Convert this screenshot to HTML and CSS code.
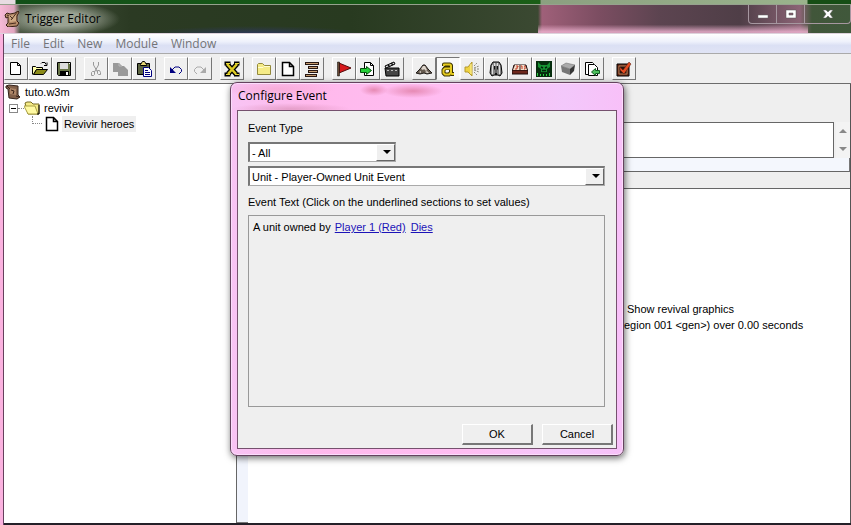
FILE: index.html
```html
<!DOCTYPE html>
<html lang="en">
<head>
<meta charset="utf-8">
<title>Trigger Editor</title>
<link rel="stylesheet" href="styles.css">
</head>
<body>
<div class="desktop"></div>
<main class="window">
  <header class="titlebar">
    <svg class="icon app-icon" viewBox="0 0 16 16"><path d="M1 4l2-2 3 1 5-1 3-2 1 1-2 4v5l2 2-2 3-9 1-2-2 2-2V6L2 7z" fill="#b58a68" stroke="#382015"/><path d="M5 5l7-1v6l-6 1z" fill="#d0aa85"/><path d="M14 0L7 9M5 13l7-1M3 4l2 1M6 5l3 3" stroke="#4b2d20" fill="none"/></svg>
    <h1 class="title">Trigger Editor</h1>
    <div class="caption-buttons">
      <button class="caption-button" aria-label="Minimize"><svg viewBox="0 0 16 12"><path d="M3 7h10v3H3z" fill="#fff" stroke="#666" stroke-width=".5"/></svg></button>
      <button class="caption-button" aria-label="Maximize"><svg viewBox="0 0 16 12"><path d="M3 2h10v8H3zM6 5h4v2H6z" fill="#fff" fill-rule="evenodd" stroke="#555" stroke-width=".5"/></svg></button>
      <button class="caption-button close" aria-label="Close"><svg viewBox="0 0 16 12"><path d="M3 2h3l2 2 2-2h3L10 6l3 4h-3L8 8l-2 2H3l3-4z" fill="#fff" stroke="#555" stroke-width=".5"/></svg></button>
    </div>
  </header>
  <div class="client">
    <nav class="menubar">
      <a href="#">File</a><a href="#">Edit</a><a href="#">New</a><a href="#">Module</a><a href="#">Window</a>
    </nav>
    <div class="toolbar">
      <div class="group">
        <button class="tool" aria-label="New"><svg class="icon" viewBox="0 0 16 16"><path d="M2.500 1.500h7l3 3v9h-10zM9.500 1.500v3h3" fill="#fff" stroke="#000"/></svg></button>
        <button class="tool" aria-label="Open"><svg class="icon" viewBox="0 0 16 16"><path d="M.5 13.500v-8h3l1 1h6v2h-6l-3 5" fill="#ffffa8" stroke="#000"/><path d="M1.500 13.500l3-5h11l-4 5z" fill="#8a8a18" stroke="#000"/><path d="M9 2.500l1-1h3l1 2M12 4.500h3v-3" fill="none" stroke="#000"/></svg></button>
        <button class="tool" aria-label="Save"><svg class="icon" viewBox="0 0 16 16"><path d="M1.500 1.500h13v13h-12l-1-1z" fill="#687548" stroke="#000"/><path d="M4 2h8v6H4z" fill="#ddd"/><path d="M4 10h9v4H4z" fill="#000"/><path d="M10 11h2v3h-2zM13 2h1v1h-1z" fill="#fff"/></svg></button>
      </div>
      <div class="group">
        <button class="tool" aria-label="Cut"><svg class="icon" viewBox="0 0 16 16"><path d="M5.500 1v3l4 7M10.500 1v3l-4 7" fill="none" stroke="#999"/><path d="M4.500 10.500h2v3l-1 1h-2v-3zM9.500 9.500h2l1 2v2h-2l-1-1z" fill="none" stroke="#999"/></svg></button>
        <button class="tool" aria-label="Copy"><svg class="icon" viewBox="0 0 16 16"><path d="M1 2h6l3 3v6H1z" fill="#999"/><path d="M6 5h6l4 4v6H6z" fill="#999"/><path d="M7 2v3h3" fill="none" stroke="#bbb"/></svg></button>
        <button class="tool" aria-label="Paste"><svg class="icon" viewBox="0 0 16 16"><path d="M1.500 2.500h12v11h-12z" fill="#5d6542" stroke="#000"/><path d="M4.500 3.500l2-3h2l2 3v1h-6z" fill="#e8d875" stroke="#000"/><path d="M7.500 6.500h5l3 3v6h-8z" fill="#fff" stroke="#000080"/><path d="M9 9.500h3M9 11.500h5M9 13.500h5" stroke="#000080"/></svg></button>
      </div>
      <div class="group">
        <button class="tool" aria-label="Undo"><svg class="icon" viewBox="0 0 16 16"><path d="M4 9l3-3h4l2.500 2.500v2L11 13" fill="none" stroke="#000080"/><path d="M2 6v6h6z" fill="#000080"/></svg></button>
        <button class="tool" aria-label="Redo"><svg class="icon" viewBox="0 0 16 16"><path d="M14 6v6H8z" fill="#aaa"/><path d="M12 9L9 6H5L2.500 8.500v2L5 13" fill="none" stroke="#aaa"/></svg></button>
      </div>
      <div class="group">
        <button class="tool" aria-label="Variables"><svg class="icon" viewBox="0 0 16 16"><path d="M3 3l9 10M13 3L4 13" stroke="#000" stroke-width="5"/><path d="M.5.500h6v4h-6zM10 .5h5.500v4H10zM.5 11.500h6v4h-6zM10 11.500h5.500v4H10z" fill="#000"/><path d="M3 3l9 10M13 3L4 13" stroke="#dccb24" stroke-width="2.500"/><path d="M2 2.500h4M11 2.500h4M2 13.500h4M11 13.500h4" stroke="#e8d83a" stroke-width="1"/></svg></button>
      </div>
      <div class="group">
        <button class="tool" aria-label="New Category"><svg class="icon" viewBox="0 0 16 16"><path d="M1.500 13.500v-10l1-1h4l2 2h6v9z" fill="#f5eb87" stroke="#93893c"/><path d="M2 6.500h5l1-1h6" stroke="#fffcd0" fill="none"/></svg></button>
        <button class="tool" aria-label="New Trigger"><svg class="icon" viewBox="0 0 16 16"><path d="M2.500 1.500h7l4 4v9h-11zM9.500 1.500v4h4" fill="#fff" stroke="#000" stroke-width="1.500"/></svg></button>
        <button class="tool" aria-label="New Comment"><svg class="icon" viewBox="0 0 16 16"><path d="M1 1h14v3H1zM4 5h10v3H4zM4 9h10v3H4zM1 13h12v3H1z" fill="#281713"/><path d="M2 2.500h12M5 6.500h8M5 10.500h8M2 14.500h10" stroke="#c79d70"/></svg></button>
      </div>
      <div class="group">
        <button class="tool" aria-label="New Event"><svg class="icon" viewBox="0 0 16 16"><path d="M3 2l12 5L3 12z" fill="#d6181b" stroke="#520b0b"/><path d="M1.500 1h2v14h-2z" fill="#684a35" stroke="#000" stroke-width=".5"/></svg></button>
        <button class="tool" aria-label="New Condition"><svg class="icon" viewBox="0 0 16 16"><path d="M4.500 1.500h6l3 3v10h-9zM10.500 1.500v3h3" fill="#fff" stroke="#000"/><path d="M.5 7.500h6v-2l5 4-5 4v-2h-6z" fill="#25cf38" stroke="#064e0d"/></svg></button>
        <button class="tool" aria-label="New Action"><svg class="icon" viewBox="0 0 16 16"><path d="M1 7h14v8H2z" fill="#444" stroke="#000"/><path d="M1 5l9-4 1 2-9 4z" fill="#ddd" stroke="#000"/><path d="M4 4l2 2M7 2l2 2" stroke="#111" stroke-width="1.500"/><path d="M3 9.500h2m2 0h2m2 0h2" stroke="#bbb"/></svg></button>
      </div>
      <div class="group">
        <button class="tool" aria-label="Terrain Editor"><svg class="icon" viewBox="0 0 16 16"><path d="M0 12l4-4 3-4h2l3 4 4 4-5 1-3-1-4 1z" fill="#665b50" stroke="#211d19"/><path d="M7 5l-2 3 2 1 1-1 2 2 1-1-2-4zM3 11l2-1v2M9 11l2 1h2l-2-2z" fill="#ddd5cc"/></svg></button>
        <button class="tool pressed" aria-label="Trigger Editor"><svg class="icon" viewBox="0 0 16 16"><g fill="none" stroke-linejoin="round"><path d="M4 5V3.500h6l1 1V12l1 1h2M11 7H5L3.500 9v3L5 13.500h4l2-2" stroke="#3c3400" stroke-width="4"/><path d="M4 5V3.500h6l1 1V12l1 1h2M11 7.500H5L3.500 9v3L5 13.500h4l2-2" stroke="#e4ca20" stroke-width="2"/></g></svg></button>
        <button class="tool" aria-label="Sound Editor"><svg class="icon" viewBox="0 0 16 16"><path d="M1 6h3l4-5v14l-4-4H1z" fill="#efd341" stroke="#b3982c"/><path d="M7 3v10" stroke="#fff4a0"/><path d="M10 5l3-3M10 7l5-2M10 8h6M10 9l5 2M10 11l3 3" stroke="#88877a" stroke-dasharray="2 1"/></svg></button>
        <button class="tool" aria-label="Object Editor"><svg class="icon" viewBox="0 0 16 16"><path d="M5 1h6l2 3 1 8-2 3-2-1H6l-2 1-2-3 1-8z" fill="#888" stroke="#000"/><path d="M4.500 4v9M6.500 2v3M9.500 2v3M11.500 4v9" stroke="#ddd"/><path d="M6 5h4v3l-1 1v5H7V9L6 8z" fill="#111"/><path d="M8 3v9" stroke="#bbb"/></svg></button>
        <button class="tool" aria-label="Campaign Editor"><svg class="icon" viewBox="0 0 16 16"><path d="M2 4h12l2 7v2H0v-2z" fill="#6d271c" stroke="#1e0d0b"/><path d="M3 4h10l2 5H1z" fill="#f0dfcc"/><path d="M4 5h2v1H5v2H3M9 5h1v3M12 5h1v3h-1" fill="none" stroke="#c63d27"/><path d="M8 4v5M1 9.500h14" stroke="#3a1510"/></svg></button>
        <button class="tool" aria-label="AI Editor"><svg class="icon" viewBox="0 0 16 16"><path d="M0 0h16v16H0z" fill="#052d0d"/><path d="M2 1l3 3h6l3-3v5l-3 2v3H5V8L2 6z" fill="#169332"/><path d="M5 6l2 1M11 6L9 7M6 9.500h4" stroke="#00200a" stroke-width="1.500"/><path d="M1.500 12v3m3-2v2m3-2v2m3-2v2m3-3v3" stroke="#2ccb45"/></svg></button>
        <button class="tool" aria-label="Object Manager"><svg class="icon" viewBox="0 0 16 16"><path d="M1 5l5-3 9 2-5 4z" fill="#aaa" stroke="#666" stroke-width=".5"/><path d="M1 5l9 3v6L2 11z" fill="#777"/><path d="M10 8l5-4-1 6-4 4z" fill="#353535"/></svg></button>
        <button class="tool" aria-label="Import Manager"><svg class="icon" viewBox="0 0 16 16"><path d="M1.500 1.500h7l1 1v11h-8z" fill="#fff" stroke="#000"/><path d="M4.500 3.500h6l3 3v8h-9z" fill="#fff" stroke="#000"/><path d="M15.500 9.500h-4v-2l-4 3.500 4 3.500v-2h4z" fill="#4bc05c" stroke="#125e22"/></svg></button>
      </div>
      <div class="group">
        <button class="tool" aria-label="Test Map"><svg class="icon" viewBox="0 0 16 16"><path d="M1 3h12v12H1z" fill="#6b2b17" stroke="#000"/><path d="M3 5h8v8H3z" fill="#2b120b" stroke="#b47f59"/><path d="M4 6l3 3 6-8 2 2-7 10-4-4z" fill="#e44b20" stroke="#4b1208" stroke-width=".5"/></svg></button>
      </div>
    </div>
    <div class="workspace">
      <aside class="tree">
        <div class="tree-row"><svg class="icon" viewBox="0 0 16 16"><path d="M1 2l3-1 9 1v9l2 2-3 2-8-1-1-9-2-1z" fill="#82604a" stroke="#35231b"/><path d="M5 4l6 1v6l-6-1z" fill="#ad8567"/><path d="M6 6l3 1-1 3M2 2l3 3M11 12l3 1" stroke="#382219" fill="none"/></svg><span>tuto.w3m</span></div>
        <div class="tree-row branch"><button class="expander" aria-label="Collapse"></button><span class="dots"></span><svg class="icon" viewBox="0 0 16 16"><path d="M1 3l2-1h4l2 2h6v10H4z" fill="#f5eb87" stroke="#776b22"/><path d="M0 6h11l3 8H4z" fill="#fffaa3" stroke="#aaa043"/><path d="M15 5v9h-2" fill="none" stroke="#000"/></svg><span>revivir</span></div>
        <div class="tree-row leaf"><span class="elbow"></span><svg class="icon" viewBox="0 0 16 16"><path d="M2.500 1.500h7l4 4v9h-11zM9.500 1.500v4h4" fill="#fff" stroke="#000" stroke-width="1.500"/></svg><span class="selected">Revivir heroes</span></div>
      </aside>
      <div class="splitter"></div>
      <section class="details">
        <div class="comment"><textarea aria-label="Trigger Comment"></textarea><div class="scroller"><i class="up"></i><i class="down"></i></div></div>
        <div class="strip"></div>
        <div class="functions"><p class="first">Show revival graphics</p><p>egion 001 &lt;gen&gt;) over 0.00 seconds</p></div>
      </section>
    </div>
  </div>
</main>
<div class="overlay">
  <form class="dialog" role="dialog" aria-labelledby="dialog-title">
    <h2 class="title dialog-title" id="dialog-title">Configure Event</h2>
    <div class="dialog-body">
      <label for="category">Event Type</label>
      <div class="combo narrow"><select id="category"><option>- All</option></select></div>
      <div class="combo"><select aria-label="Event"><option>Unit - Player-Owned Unit Event</option></select></div>
      <p class="caption">Event Text (Click on the underlined sections to set values)</p>
      <div class="event-text">A unit owned by <a href="#">Player 1 (Red)</a> <a href="#">Dies</a></div>
      <div class="actions"><button type="button">OK</button><button type="button">Cancel</button></div>
    </div>
  </form>
</div>
</body>
</html>
```
FILE: styles.css
```css
* { box-sizing: border-box; }

body {
  margin: 0;
  height: 100vh;
  display: flex;
  flex-direction: column;
  position: relative;
  overflow: hidden;
  background: #242028;
  color: #000;
  font: 11px/16px "Liberation Sans", Arial, sans-serif;
}

h1, h2, p { margin: 0; }
button, select, textarea { font: inherit; color: inherit; border-radius: 0; margin: 0; }

.desktop {
  height: 4px;
  background: linear-gradient(90deg, #e8dce2 15px, #125018 16px, #1b5e17 540px, #8ba080 541px, #9ab38c 807px, #164e15 808px);
}

.icon { width: 16px; height: 16px; flex: none; display: block; }

.window {
  flex: 1;
  display: flex;
  flex-direction: column;
  border-top: 1px solid #96a28e;
  padding: 0 0 2px 4px;
  background: linear-gradient(90deg, #fbb2df 3px, #66405e 3px, #66405e 4px, transparent 4px);
}

.titlebar {
  height: 29px;
  display: flex;
  align-items: center;
  gap: 5px;
  margin-left: -4px;
  padding-left: 4px;
  border-bottom: 1px solid #ddd2dc;
  background:
    radial-gradient(ellipse 60px 17px at 60px 14px, #b1b8aacc 40%, transparent),
    radial-gradient(ellipse 110px 8px at 255px 29px, #303878aa, transparent),
    linear-gradient(transparent 70%, #f0b4d2cc 95%) 538px 0 / 270px 100% no-repeat,
    linear-gradient(90deg, #f7bad7 0, #e1a5bf 14px, #4b5743 20px, #2b3a23 130px, #283a20 350px, #3b4932 538px, #9f6079 542px, #7b4d61 600px, #5c4450 660px, #4f3e47 740px, #8b6375 800px, #41563a 812px, #40583b);
}

.title {
  font: 12px/16px "Open Sans", "Noto Sans", sans-serif;
}

.caption-buttons {
  align-self: flex-start;
  display: flex;
  margin-left: auto;
  border: 1px solid #a697a0;
  border-top: 0;
  border-radius: 0 0 4px 4px;
}
.caption-button {
  width: 28px;
  height: 18px;
  padding: 0;
  display: grid;
  place-items: center;
  border: 0;
  border-right: 1px solid #a697a0;
  background: transparent;
}
.caption-button svg { width: 16px; height: 12px; }
.caption-button.close { width: 45px; border-right: 0; }

.client { flex: 1; display: flex; flex-direction: column; }

.menubar {
  height: 19px;
  display: flex;
  align-items: center;
  gap: 13px;
  padding-left: 7px;
  background: linear-gradient(#fff, #eef1fb 40%, #dbe0f4 60%, #e0e4f5);
}
.menubar a { color: #737477; text-decoration: none; font: 12px/16px "Open Sans", "Noto Sans", sans-serif; }

.toolbar {
  height: 31px;
  display: flex;
  align-items: center;
  gap: 8px;
  border-top: 1px solid #aaa;
  border-bottom: 1px solid #6c6c6c;
  background: #efefef;
}
.group { display: flex; }
.tool {
  width: 24px;
  height: 23px;
  padding: 0;
  display: grid;
  place-items: center;
  background: #efefef;
  border: 1px solid #fff;
  border-right-color: #777;
  border-bottom-color: #777;
}
.tool.pressed { background: #f8f8f8; border-color: #777 #fff #fff #777; }

.workspace { flex: 1; display: flex; background: #fff; }

.tree { flex: 0 0 233px; border-right: 1px solid #666; }
.tree-row { height: 16px; display: flex; align-items: center; gap: 4px; padding-left: 1px; }
.tree-row.branch { padding-left: 5px; }
.tree-row.leaf { padding-left: 28px; gap: 2px; }
.expander {
  width: 9px;
  height: 9px;
  padding: 0;
  border: 1px solid #888;
  background: linear-gradient(#000, #000) center / 5px 1px no-repeat #fff;
}
.dots { width: 6px; margin: 0 -4px; border-top: 1px dotted #888; }
.elbow { width: 10px; height: 8px; align-self: flex-start; border: dotted #888; border-width: 0 0 1px 1px; }
.selected { padding: 0 2px; background: #efefef; }

.splitter { width: 11px; background: #f1f4fc; border-bottom: 1px solid #777; }

.details { flex: 1; display: flex; flex-direction: column; background: #efefef; border-right: 1px solid #555; }
.comment { display: flex; gap: 2px; margin-top: 38px; height: 36px; }
.comment textarea { flex: 1; border: 1px solid #666; background: #fff; resize: none; }
.scroller { width: 14px; display: flex; flex-direction: column; justify-content: space-between; align-items: center; padding: 7px 0; background: #f3f3f3; }
.scroller i { border: 4px solid transparent; }
.scroller .up { border-top-width: 0; border-bottom-color: #888; }
.scroller .down { border-bottom-width: 0; border-top-color: #888; }
.strip { height: 14px; background: #f4f7fd; border-bottom: 1px solid #666; border-right: 1px solid #777; }
.functions { flex: 1; margin-top: 16px; padding: 112px 0 0 376px; background: #fff; border-top: 1px solid #666; }
.functions .first { padding-left: 3px; }

.overlay {
  position: absolute;
  inset: 82px 0 auto;
  display: flex;
  justify-content: center;
  padding-left: 3px;
}
.dialog {
  width: 394px;
  padding: 6px;
  border: 1px solid #65425f;
  border-radius: 7px;
  background:
    radial-gradient(ellipse 14px 6px at 143px 7px, #e68ab4, transparent),
    radial-gradient(ellipse 30px 7px at 182px 8px, #e68ab4, transparent),
    radial-gradient(ellipse 60px 8px at 45px 6px, #f5a3cdaa, transparent),
    radial-gradient(ellipse 60px 6px at 60px 26px, #d990b6aa, transparent),
    linear-gradient(90deg, #f8c4f4, #ffb9ec 20%, #ffbdf2 60%, #f3c8fb 85%, #f8c0f8);
  box-shadow: inset 0 0 0 1px #fbdcfb, 1px 2px 7px #0009;
}
.dialog-title { height: 21px; line-height: 14px; padding-left: 1px; }
.dialog-body {
  display: flex;
  flex-direction: column;
  padding: 9px 3px 3px 10px;
  border: 1px solid #75516e;
  background: #efefef;
}
.combo { position: relative; height: 20px; margin: 0 8px 4px 0; }
.combo.narrow { width: 148px; margin-top: 6px; }
.combo select {
  display: block;
  width: 100%;
  height: 20px;
  padding: 0 20px 0 2px;
  appearance: none;
  border: 2px solid;
  border-color: #777 #aaa #aaa #777;
  border-width: 2px 1px 1px 2px;
  background: #fff;
}
.combo::before {
  content: "";
  position: absolute;
  inset: 2px 1px 1px auto;
  width: 17px;
  border: 1px solid #fff;
  border-right-color: #666;
  border-bottom-color: #666;
  background: #efefef;
  pointer-events: none;
}
.combo::after {
  content: "";
  position: absolute;
  top: 8px;
  right: 5px;
  border: 4px solid transparent;
  border-top-color: #000;
  border-bottom: 0;
  pointer-events: none;
}
.caption { margin-top: 4px; }
.event-text {
  height: 192px;
  margin: 5px 8px 17px 0;
  padding: 3px 4px;
  border: 1px solid #999;
}
.event-text a { color: #1c13b8; margin: 0 1px; }
.actions { display: flex; justify-content: flex-end; gap: 9px; }
.actions button {
  width: 71px;
  height: 21px;
  padding: 0;
  border: 1px solid #fff;
  border-right: 2px solid #777;
  border-bottom: 2px solid #777;
  background: #efefef;
}
```
